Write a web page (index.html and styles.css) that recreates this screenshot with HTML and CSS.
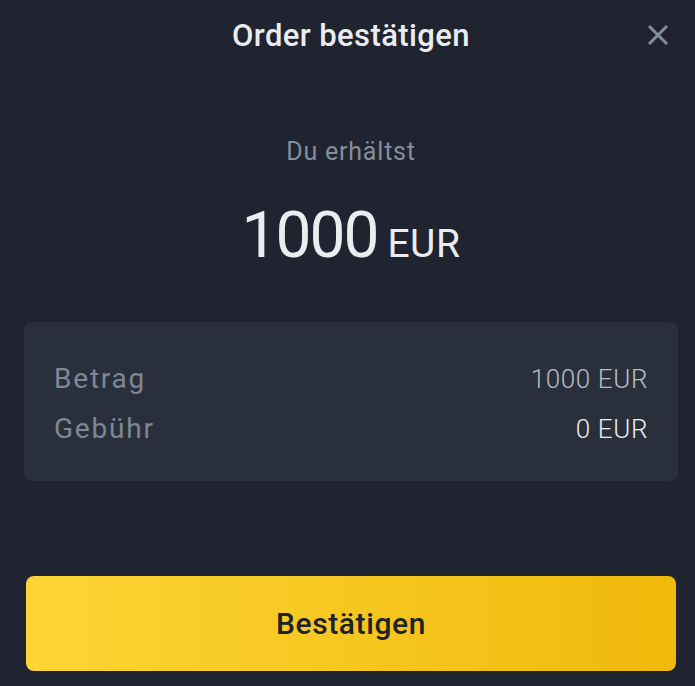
FILE: index.html
```html
<!DOCTYPE html>
<html lang="de">
<head>
    <meta charset="UTF-8">
    <meta name="viewport" content="width=device-width, initial-scale=1.0">
    <title>Order bestätigen</title>
    <link rel="stylesheet" href="styles.css">
</head>
<body>
    <div class="dialog">
        <div class="dialog-header">
            <span></span>
            <h2 class="dialog-title">Order bestätigen</h2>
            <button class="close-btn" aria-label="Schließen">
                <svg width="22" height="22" viewBox="0 0 22 22">
                    <path d="M2 2 L20 20 M20 2 L2 20" stroke="#848e9c" stroke-width="3" fill="none"/>
                </svg>
            </button>
        </div>

        <div class="receive">
            <div class="receive-label">Du erhältst</div>
            <div class="receive-amount">
                <span class="amount-value">1000</span><span class="amount-unit">EUR</span>
            </div>
        </div>

        <div class="summary">
            <div class="summary-row">
                <span class="summary-label">Betrag</span>
                <span class="summary-value">1000 EUR</span>
            </div>
            <div class="summary-row">
                <span class="summary-label">Gebühr</span>
                <span class="summary-value summary-value-strong">0 EUR</span>
            </div>
        </div>

        <button class="confirm-btn">Bestätigen</button>
    </div>
</body>
</html>
```

FILE: styles.css
```css
body {
    margin: 0;
    overflow: hidden;
    background-color: #1f2430;
    font-family: Roboto, "Noto Sans", sans-serif;
    color: #eaecef;
}

/* dialog is a bit wider than the window, right edge is cut off */
.dialog {
    display: flex;
    flex-direction: column;
    width: 702px;
    height: 686px;
}

.dialog-header {
    display: grid;
    grid-template-columns: 1fr auto 1fr;
    align-items: center;
    height: 70px;
}

.dialog-title {
    margin: 0;
    font-size: 31px;
    font-weight: 500;
    letter-spacing: 0.4px;
    color: #eaecef;
}

.close-btn {
    justify-self: end;
    margin-right: 33px;
    padding: 0;
    border: none;
    background: none;
    width: 22px;
    height: 22px;
    cursor: pointer;
}

.close-btn svg {
    display: block;
}

.receive {
    margin-top: 66px;
    text-align: center;
}

.receive-label {
    font-size: 25px;
    line-height: 32px;
    letter-spacing: 0.8px;
    color: #848e9c;
}

.receive-amount {
    margin-top: 28px;
    line-height: 80px;
    height: 80px;
}

.amount-value {
    font-size: 64px;
    letter-spacing: -2px;
    color: #eaecef;
}

.amount-unit {
    font-size: 39px;
    margin-left: 10px;
    letter-spacing: 0.5px;
    color: #eaecef;
}

.summary {
    margin: 46px 24px 0;
    padding: 39px 30px 34px;
    background-color: #2a303b;
    border-radius: 8px;
    display: flex;
    flex-direction: column;
    gap: 14px;
}

.summary-row {
    display: flex;
    justify-content: space-between;
    align-items: baseline;
    line-height: 36px;
}

.summary-label {
    font-size: 28px;
    letter-spacing: 1.8px;
    color: #7e8796;
}

.summary-value {
    font-size: 26px;
    font-weight: 300;
    letter-spacing: 0.6px;
    color: #b7bdc6;
}

.summary-value-strong {
    color: #eaecef;
}

.confirm-btn {
    margin: 95px 26px 0;
    height: 95px;
    border: none;
    border-radius: 8px;
    background: linear-gradient(90deg, #fcd535 0%, #f0b90b 100%);
    font-family: Roboto, "Noto Sans", sans-serif;
    font-size: 30px;
    font-weight: 500;
    letter-spacing: 0.6px;
    color: #1e2329;
    cursor: pointer;
}
```
